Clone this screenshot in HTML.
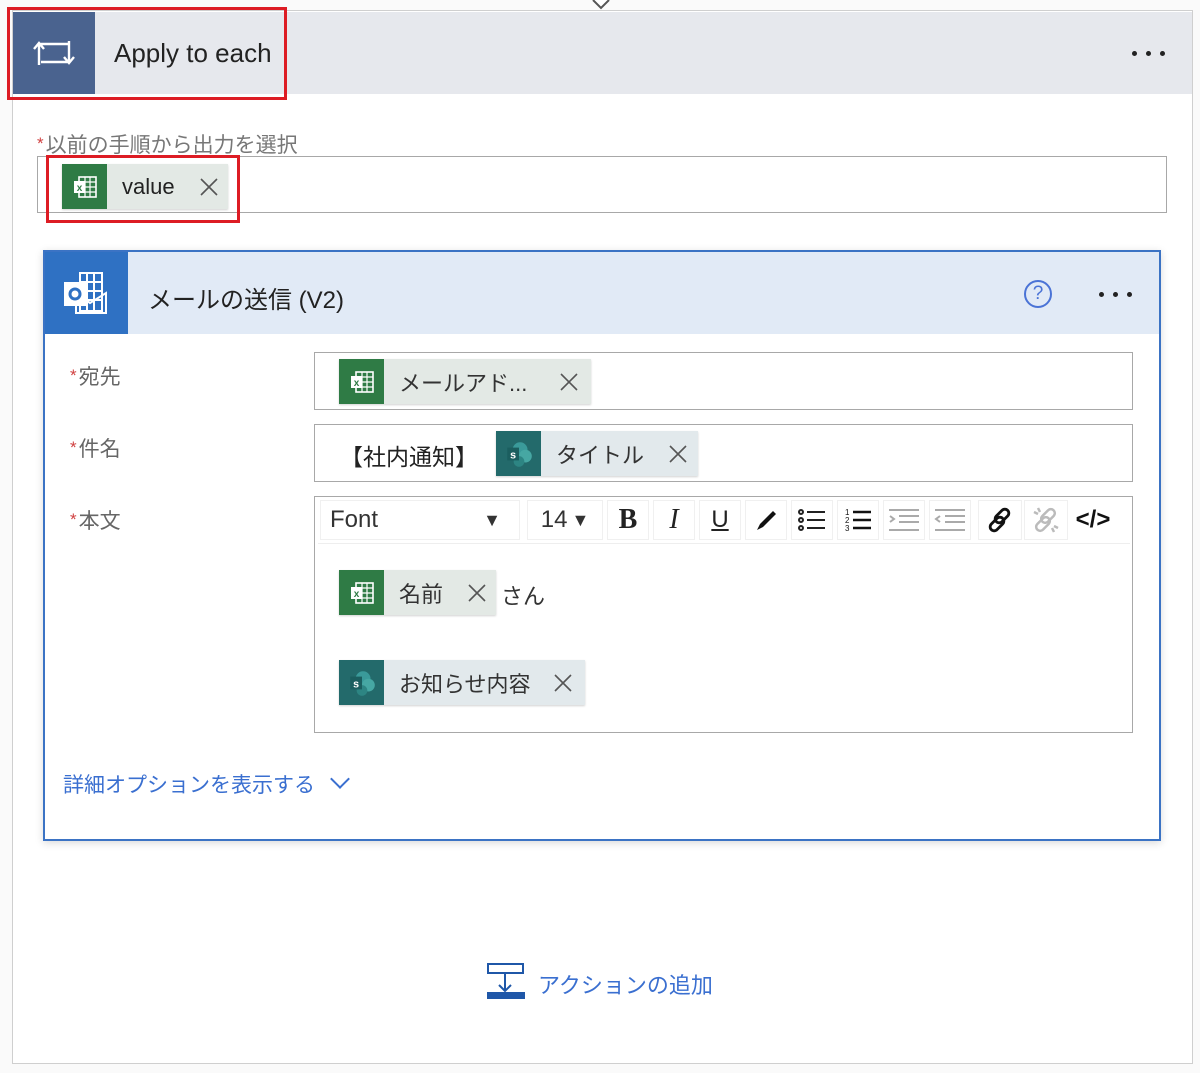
<!DOCTYPE html>
<html><head><meta charset="utf-8"><style>
*{margin:0;padding:0;box-sizing:border-box}
body{width:1200px;height:1073px;background:#fafafa;position:relative;overflow:hidden;font-family:"Liberation Sans","Noto Sans CJK JP",sans-serif;color:#222}
.a{position:absolute}
.chip{position:absolute;height:45px;background:#e3e9e5;box-shadow:0 1px 2px rgba(0,0,0,.18);display:flex;align-items:center;font-size:22px;color:#333}
.chip .ic{width:45px;height:45px;display:flex;align-items:center;justify-content:center}
.xl{background:#2f7b45}.sp{background:#236a6b}
.chip .t{padding-left:15px}
.x{display:inline-block;width:20px;height:20px}
.lbl{position:absolute;font-size:21px;color:#666}
.lbl b{color:#d04040;font-weight:normal;font-size:17px;vertical-align:3px;margin-right:2px}
.box{position:absolute;border:1.5px solid #a8a8a8;background:#fff}
.tb{position:absolute;top:500px;height:40px;background:#fff;border:1px solid #f0f0f0;display:flex;align-items:center;justify-content:center}
.dots{position:absolute;display:flex;gap:9px}
.dots i{width:5px;height:5px;border-radius:50%;background:#222}
</style></head><body>
<svg width="0" height="0" style="position:absolute"><defs>
<symbol id="xls" viewBox="0 0 30 30"><rect x="9" y="5" width="17" height="20" fill="none" stroke="#fff" stroke-width="1.6"/><path d="M15 5v20M20 5v20M9 10h17M9 15h17M9 20h17" stroke="#fff" stroke-width="1.2"/><rect x="4" y="9" width="11" height="12" fill="#fff"/><text x="9.5" y="19" font-size="10" font-family="Liberation Sans" fill="#2f7b45" text-anchor="middle" font-weight="bold">x</text></symbol>
<symbol id="shp" viewBox="0 0 30 30"><circle cx="16" cy="11" r="7" fill="#3a9a9a"/><circle cx="21" cy="17" r="6" fill="#46a7a3"/><circle cx="15" cy="22" r="5" fill="#2d8583"/><rect x="4" y="9" width="11" height="12" fill="#1b5e5f"/><text x="9.5" y="19" font-size="10" font-family="Liberation Sans" fill="#fff" text-anchor="middle" font-weight="bold">s</text></symbol>
<symbol id="cx" viewBox="0 0 20 20"><path d="M2 2l16 16M18 2L2 18" stroke="#555" stroke-width="1.6"/></symbol>
</defs></svg>

<div class="a" style="left:12px;top:10px;width:1181px;height:1054px;border:1.5px solid #cfcfcf;background:#fff"></div>
<svg class="a" style="left:590px;top:0" width="22" height="11"><path d="M3 0l8 8 8-8" fill="#fff" stroke="#555" stroke-width="2"/></svg>
<div class="a" style="left:13px;top:12px;width:1179px;height:82px;background:#e6e8ed"></div>
<div class="a" style="left:13px;top:12px;width:82px;height:82px;background:#4a638f;display:flex;align-items:center;justify-content:center">
<svg width="44" height="34" viewBox="0 0 44 34" fill="none" stroke="#fff" stroke-width="2.4"><path d="M7 29V8h29M2 13l5-6 5 6M37 5v21H9M32 21l5 6 5-6"/></svg></div>
<div class="a" style="left:114px;top:38px;font-size:26px;color:#222">Apply to each</div>
<div class="dots" style="left:1132px;top:51px"><i></i><i></i><i></i></div>
<div class="a" style="left:7px;top:7px;width:280px;height:93px;border:3px solid #dd1c24"></div>

<div class="lbl" style="left:37px;top:129px;color:#777"><b>*</b>以前の手順から出力を選択</div>
<div class="box" style="left:37px;top:156px;width:1130px;height:57px"></div>
<div class="chip" style="left:62px;top:164px;width:166px"><div class="ic xl"><svg width="30" height="30"><use href="#xls"/></svg></div><span class="t" style="color:#222">value</span><svg class="x" style="margin-left:24px"><use href="#cx"/></svg></div>
<div class="a" style="left:46px;top:155px;width:194px;height:68px;border:3px solid #dd1c24"></div>

<div class="a" style="left:43px;top:250px;width:1118px;height:591px;border:2px solid #3b73c4;background:#fff;box-shadow:0 2px 8px rgba(0,0,0,.15)"></div>
<div class="a" style="left:45px;top:252px;width:1114px;height:82px;background:#e1eaf6"></div>
<div class="a" style="left:45px;top:252px;width:83px;height:82px;background:#2f71c3;display:flex;align-items:center;justify-content:center">
<svg width="54" height="48" viewBox="0 0 54 48" fill="none" stroke="#fff" stroke-width="2"><rect x="20" y="4" width="22" height="38"/><path d="M27 4v38M34 4v38M20 13h22M20 22h22M20 31h22M16 24l14 10 16-10v20H16z" /><rect x="5" y="14" width="20" height="22" fill="#fff"/><circle cx="15" cy="25" r="5" stroke="#2f71c3" stroke-width="3"/></svg></div>
<div class="a" style="left:148px;top:280px;font-size:24px;color:#222">メールの送信 (V2)</div>
<div class="a" style="left:1024px;top:280px;width:28px;height:28px;border:2px solid #4a73d6;border-radius:50%;color:#4a73d6;font-size:19px;text-align:center;line-height:24px">?</div>
<div class="dots" style="left:1099px;top:292px"><i></i><i></i><i></i></div>

<div class="lbl" style="left:70px;top:361px"><b>*</b>宛先</div>
<div class="lbl" style="left:70px;top:433px"><b>*</b>件名</div>
<div class="lbl" style="left:70px;top:505px"><b>*</b>本文</div>

<div class="box" style="left:314px;top:352px;width:819px;height:58px"></div>
<div class="chip" style="left:339px;top:359px;width:252px"><div class="ic xl"><svg width="30" height="30"><use href="#xls"/></svg></div><span class="t">メールアド...</span><svg class="x" style="margin-left:32px"><use href="#cx"/></svg></div>

<div class="box" style="left:314px;top:424px;width:819px;height:58px"></div>
<div class="a" style="left:340px;top:438px;font-size:23px;color:#222">【社内通知】</div>
<div class="chip" style="left:496px;top:431px;width:202px;background:#e2e9ec"><div class="ic sp"><svg width="32" height="32"><use href="#shp"/></svg></div><span class="t">タイトル</span><svg class="x" style="margin-left:24px"><use href="#cx"/></svg></div>

<div class="box" style="left:314px;top:496px;width:819px;height:237px"></div>
<div class="a" style="left:318px;top:543px;width:812px;height:1px;background:#eee"></div>
<div class="tb" style="left:320px;width:200px;justify-content:space-between;padding:0 18px 0 9px;font-size:24px;color:#333"><span>Font</span><span style="font-size:18px">▼</span></div>
<div class="tb" style="left:527px;width:76px;font-size:24px;color:#333">14 <span style="font-size:18px;margin-left:4px">▼</span></div>
<div class="tb" style="left:607px;width:42px;font-family:'Liberation Serif',serif;font-weight:bold;font-size:28px">B</div>
<div class="tb" style="left:653px;width:42px;font-family:'Liberation Serif',serif;font-style:italic;font-size:28px">I</div>
<div class="tb" style="left:699px;width:42px;font-size:24px;text-decoration:underline">U</div>
<div class="tb" style="left:745px;width:42px"><svg width="28" height="28" viewBox="0 0 28 28"><path d="M5 24l3-6 13-13 3 3-13 13z" fill="#111"/></svg></div>
<div class="tb" style="left:791px;width:42px"><svg width="32" height="28" viewBox="0 0 32 28" stroke="#222" fill="none" stroke-width="2"><circle cx="5" cy="6" r="2"/><circle cx="5" cy="14" r="2"/><circle cx="5" cy="22" r="2"/><path d="M11 6h18M11 14h18M11 22h18"/></svg></div>
<div class="tb" style="left:837px;width:42px"><svg width="32" height="28" viewBox="0 0 32 28" stroke="#111" fill="none" stroke-width="2.5"><path d="M11 6h18M11 14h18M11 22h18"/><text x="3" y="9" font-size="8" fill="#111" stroke="none">1</text><text x="3" y="17" font-size="8" fill="#111" stroke="none">2</text><text x="3" y="25" font-size="8" fill="#111" stroke="none">3</text></svg></div>
<div class="tb" style="left:883px;width:42px"><svg width="34" height="28" viewBox="0 0 34 28" stroke="#aaa" fill="none" stroke-width="2"><path d="M2 4h30M12 10h20M12 16h20M2 24h30M3 10l4 3-4 3"/></svg></div>
<div class="tb" style="left:929px;width:42px"><svg width="34" height="28" viewBox="0 0 34 28" stroke="#aaa" fill="none" stroke-width="2"><path d="M2 4h30M12 10h20M12 16h20M2 24h30M7 10l-4 3 4 3"/></svg></div>
<div class="tb" style="left:978px;width:44px"><svg width="32" height="32" viewBox="0 0 32 32" stroke="#111" fill="none" stroke-width="2.8"><rect x="14" y="4" width="8" height="16" rx="4" transform="rotate(45 18 12)"/><rect x="9" y="12" width="8" height="16" rx="4" transform="rotate(45 13 20)"/></svg></div>
<div class="tb" style="left:1024px;width:44px"><svg width="32" height="32" viewBox="0 0 32 32" stroke="#bbb" fill="none" stroke-width="2.5"><rect x="14" y="4" width="8" height="16" rx="4" transform="rotate(45 18 12)"/><rect x="9" y="12" width="8" height="16" rx="4" transform="rotate(45 13 20)"/><path d="M8 4l2 4M4 8l4 2M24 28l-2-4M28 24l-4-2"/></svg></div>
<div class="tb" style="left:1070px;width:46px;border:none;font-size:24px;font-weight:bold;color:#111">&lt;/&gt;</div>

<div class="chip" style="left:339px;top:570px;width:157px"><div class="ic xl"><svg width="30" height="30"><use href="#xls"/></svg></div><span class="t">名前</span><svg class="x" style="margin-left:24px"><use href="#cx"/></svg></div>
<div class="a" style="left:501px;top:579px;font-size:22px;color:#333">さん</div>
<div class="chip" style="left:339px;top:660px;width:246px;background:#e2e9ec"><div class="ic sp"><svg width="32" height="32"><use href="#shp"/></svg></div><span class="t">お知らせ内容</span><svg class="x" style="margin-left:22px"><use href="#cx"/></svg></div>

<div class="a" style="left:63px;top:769px;font-size:21px;color:#3a6fd0">詳細オプションを表示する <span style="display:inline-block;margin-left:12px;width:14px;height:14px;border-right:2px solid #3a6fd0;border-bottom:2px solid #3a6fd0;transform:rotate(45deg);vertical-align:6px"></span></div>

<svg class="a" style="left:486px;top:962px" width="40" height="38" viewBox="0 0 40 38"><rect x="2" y="2" width="35" height="9" fill="none" stroke="#1f57a8" stroke-width="2"/><path d="M19 11v17M13 23l6 6 6-6" fill="none" stroke="#1f57a8" stroke-width="2"/><rect x="1" y="30" width="38" height="7" fill="#1f57a8"/></svg>
<div class="a" style="left:538px;top:968px;font-size:22px;color:#3a6fd0">アクションの追加</div>
</body></html>
